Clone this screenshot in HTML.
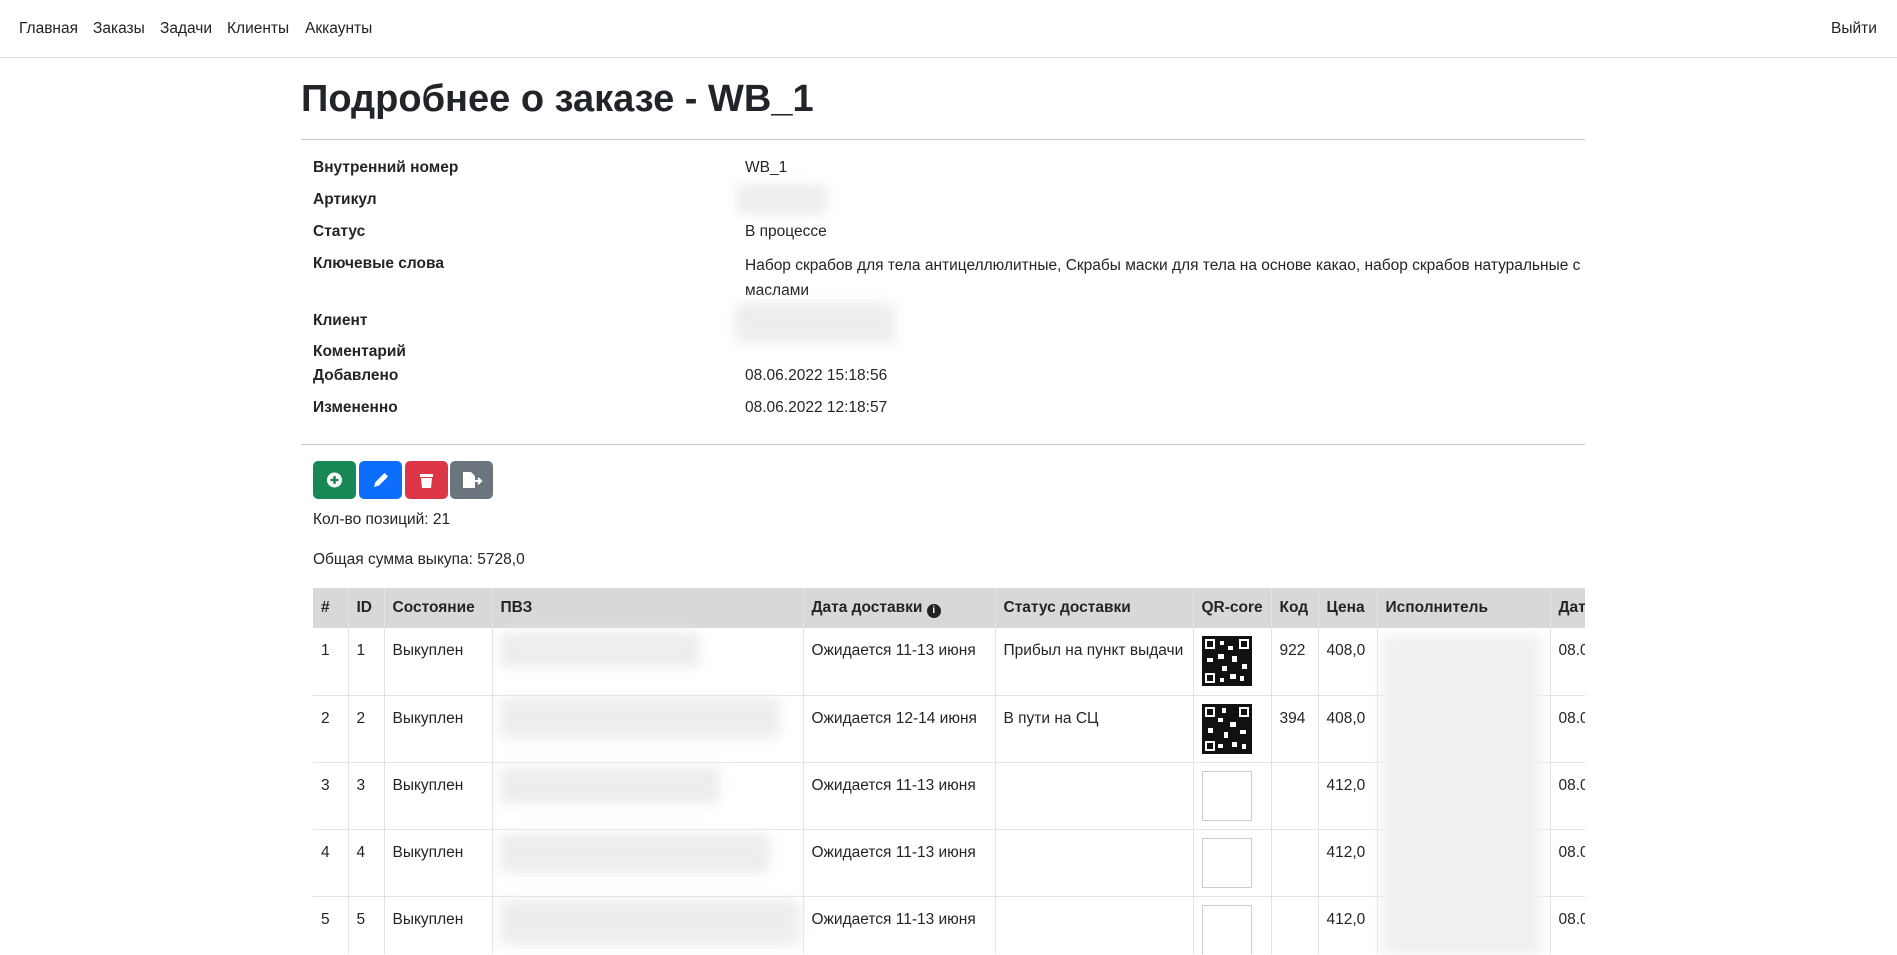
<!DOCTYPE html>
<html><head><meta charset="utf-8"><style>
*{box-sizing:border-box;margin:0;padding:0}
body{width:1897px;height:954px;overflow:hidden;background:#fff;font-family:"Liberation Sans","DejaVu Sans",sans-serif;color:#212529;font-size:15.5px;position:relative}
.a{position:absolute;white-space:nowrap}
nav{position:absolute;left:0;top:0;width:1897px;height:58px;border-bottom:1px solid #dee2e6}
nav span{position:absolute;top:20px;font-size:15.5px;color:#222}
h1{position:absolute;left:301px;top:78px;font-size:38px;font-weight:bold;color:#212529}
.hr{position:absolute;left:301px;width:1284px;height:1px;background:#c8c8c8}
.l{position:absolute;left:313px;font-weight:bold}
.v{position:absolute;left:745px}
.blur{position:absolute;background:#ededed;filter:blur(6px);border-radius:6px}
.btn{position:absolute;top:461px;width:43px;height:38px;border-radius:5px}
.tw{position:absolute;left:313px;top:588px;width:1272px;height:366px;overflow:hidden}
table{border-collapse:collapse;table-layout:fixed;width:1372px}
th{background:#d8d8d8;height:40px;text-align:left;padding:0 8px;font-weight:bold;border-left:1px solid #e3e3e3;font-size:15.5px;white-space:nowrap;overflow:hidden}
td{height:67px;vertical-align:top;padding:14px 8px 0;border:1px solid #e3e3e3;border-top:none;white-space:nowrap}
td:first-child,th:first-child{border-left:none}
.eb{width:50px;height:50px;border:1px solid #ccc;margin-top:-6px;margin-left:0}
</style></head><body>
<nav>
<span style="left:19px">Главная</span><span style="left:93px">Заказы</span><span style="left:160px">Задачи</span><span style="left:227px">Клиенты</span><span style="left:305px">Аккаунты</span><span style="left:1831px">Выйти</span>
</nav>
<h1>Подробнее о заказе - WB_1</h1>
<div class="hr" style="top:139px"></div>
<div class="l" style="top:159px">Внутренний номер</div><div class="v" style="top:159px">WB_1</div>
<div class="l" style="top:191px">Артикул</div><div class="blur" style="left:737px;top:184px;width:90px;height:30px"></div>
<div class="l" style="top:223px">Статус</div><div class="v" style="top:223px">В процессе</div>
<div class="l" style="top:255px">Ключевые слова</div><div class="v" style="top:253px;width:840px;line-height:25px;white-space:normal">Набор скрабов для тела антицеллюлитные, Скрабы маски для тела на основе какао, набор скрабов натуральные с маслами</div>
<div class="l" style="top:312px">Клиент</div><div class="blur" style="left:735px;top:303px;width:160px;height:40px"></div>
<div class="l" style="top:343px">Коментарий</div>
<div class="l" style="top:367px">Добавлено</div><div class="v" style="top:367px">08.06.2022 15:18:56</div>
<div class="l" style="top:399px">Измененно</div><div class="v" style="top:399px">08.06.2022 12:18:57</div>
<div class="hr" style="top:444px"></div>
<div class="btn" style="left:313px;background:#198754"><svg width="43" height="38"><circle cx="21.5" cy="19" r="7.5" fill="#fff"/><path d="M21.5 15v8M17.5 19h8" stroke="#198754" stroke-width="2.4"/></svg></div>
<div class="btn" style="left:359px;background:#0d6efd"><svg width="43" height="38"><path d="M15 26l1.5-5 9-9 3.5 3.5-9 9z" fill="#fff"/></svg></div>
<div class="btn" style="left:405px;background:#dc3545"><svg width="43" height="38"><rect x="15" y="13" width="13" height="3" fill="#fff"/><path d="M16 17h11l-1 10h-9z" fill="#fff"/></svg></div>
<div class="btn" style="left:450px;background:#6c757d"><svg width="43" height="38"><path d="M13 11h8l4 4v12h-12z" fill="#fff"/><path d="M24 20h6M28 17l3 3-3 3" stroke="#fff" stroke-width="2" fill="none"/></svg></div>
<div class="a" style="left:313px;top:511px">Кол-во позиций: 21</div>
<div class="a" style="left:313px;top:551px">Общая сумма выкупа: 5728,0</div>
<div class="tw"><table>
<colgroup><col style="width:35px"><col style="width:36px"><col style="width:108px"><col style="width:311px"><col style="width:192px"><col style="width:198px"><col style="width:78px"><col style="width:47px"><col style="width:59px"><col style="width:173px"><col style="width:135px"></colgroup>
<tr><th>#</th><th>ID</th><th>Состояние</th><th>ПВЗ</th><th>Дата доставки <span style="display:inline-block;width:14px;height:14px;border-radius:50%;background:#222;color:#fff;font-size:10px;text-align:center;line-height:14px;vertical-align:-1px">i</span></th><th>Статус доставки</th><th>QR-core</th><th>Код</th><th>Цена</th><th>Исполнитель</th><th>Дата</th></tr>
<tr><td>1</td><td>1</td><td>Выкуплен</td><td></td><td>Ожидается 11-13 июня</td><td>Прибыл на пункт выдачи</td><td><svg width="50" height="50" style="margin-top:-6px"><rect x="0" y="0" width="50" height="50" fill="#111"/><g fill="#fff"><rect x="3" y="3" width="10" height="10"/><rect x="37" y="3" width="10" height="10"/><rect x="3" y="37" width="10" height="10"/><rect x="18" y="5" width="4" height="4"/><rect x="26" y="10" width="5" height="4"/><rect x="16" y="18" width="6" height="5"/><rect x="30" y="20" width="5" height="6"/><rect x="5" y="22" width="6" height="4"/><rect x="40" y="28" width="5" height="5"/><rect x="20" y="30" width="5" height="5"/><rect x="28" y="38" width="6" height="5"/><rect x="38" y="40" width="4" height="5"/><rect x="18" y="42" width="4" height="4"/></g><g fill="#111"><rect x="5" y="5" width="6" height="6"/><rect x="39" y="5" width="6" height="6"/><rect x="5" y="39" width="6" height="6"/></g></svg></td><td>922</td><td>408,0</td><td></td><td>08.06</td></tr>
<tr><td>2</td><td>2</td><td>Выкуплен</td><td></td><td>Ожидается 12-14 июня</td><td>В пути на СЦ</td><td><svg width="50" height="50" style="margin-top:-6px"><rect x="0" y="0" width="50" height="50" fill="#111"/><g fill="#fff"><rect x="3" y="3" width="10" height="10"/><rect x="37" y="3" width="10" height="10"/><rect x="3" y="37" width="10" height="10"/><rect x="20" y="4" width="4" height="5"/><rect x="16" y="14" width="5" height="4"/><rect x="28" y="18" width="6" height="5"/><rect x="6" y="24" width="5" height="5"/><rect x="38" y="26" width="6" height="4"/><rect x="22" y="28" width="4" height="6"/><rect x="30" y="38" width="5" height="5"/><rect x="16" y="40" width="5" height="4"/><rect x="40" y="40" width="4" height="5"/></g><g fill="#111"><rect x="5" y="5" width="6" height="6"/><rect x="39" y="5" width="6" height="6"/><rect x="5" y="39" width="6" height="6"/></g></svg></td><td>394</td><td>408,0</td><td></td><td>08.06</td></tr>
<tr><td>3</td><td>3</td><td>Выкуплен</td><td></td><td>Ожидается 11-13 июня</td><td></td><td><div class="eb"></div></td><td></td><td>412,0</td><td></td><td>08.06</td></tr>
<tr><td>4</td><td>4</td><td>Выкуплен</td><td></td><td>Ожидается 11-13 июня</td><td></td><td><div class="eb"></div></td><td></td><td>412,0</td><td></td><td>08.06</td></tr>
<tr><td>5</td><td>5</td><td>Выкуплен</td><td></td><td>Ожидается 11-13 июня</td><td></td><td><div class="eb"></div></td><td></td><td>412,0</td><td></td><td>08.06</td></tr>
</table></div>
<div class="blur" style="left:500px;top:632px;width:200px;height:35px"></div>
<div class="blur" style="left:500px;top:698px;width:280px;height:40px"></div>
<div class="blur" style="left:500px;top:766px;width:220px;height:38px"></div>
<div class="blur" style="left:500px;top:833px;width:270px;height:40px"></div>
<div class="blur" style="left:500px;top:900px;width:300px;height:45px"></div>
<div class="blur" style="left:1382px;top:635px;width:160px;height:320px;background:#f0f0f0"></div>
</body></html>
